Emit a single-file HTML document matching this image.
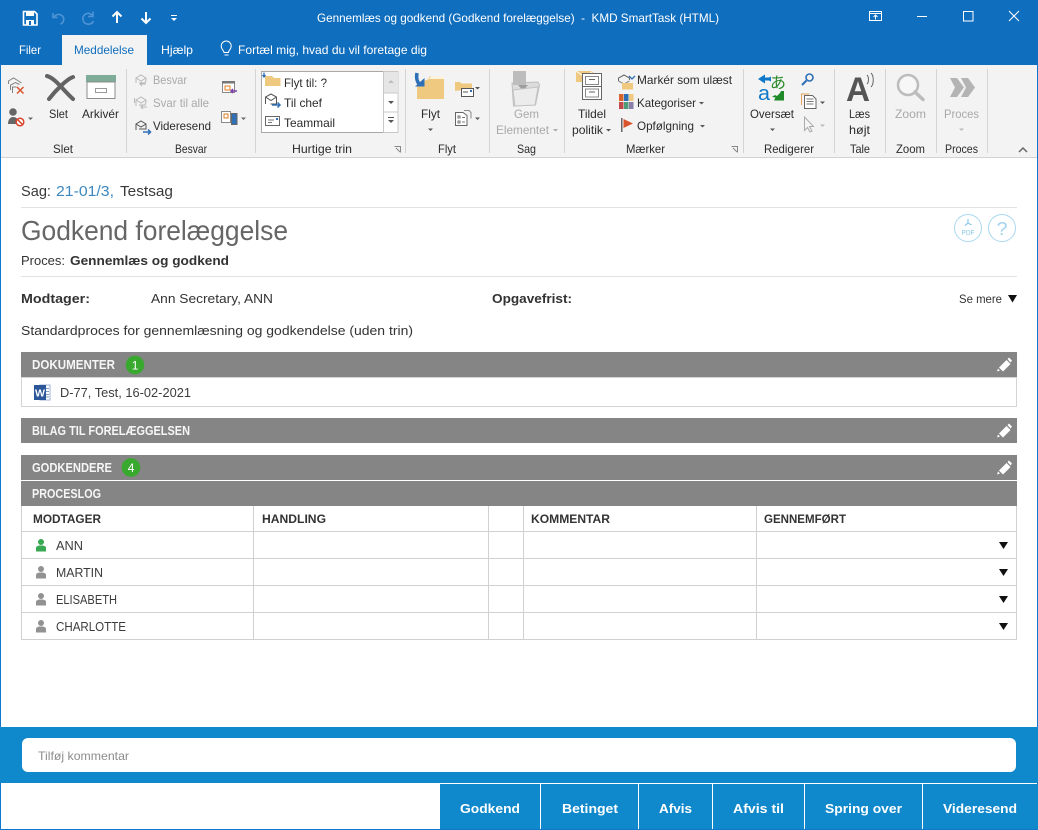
<!DOCTYPE html>
<html lang="da"><head><meta charset="utf-8"><title>Gennemlæs og godkend</title>
<style>
html,body{margin:0;padding:0;background:#fff;width:1038px;height:830px;overflow:hidden}
svg{display:block;position:absolute;left:0;top:0}
text{font-family:"Liberation Sans",sans-serif;font-size:12px;fill:#2b2b2b}
.w{fill:#fff}.g{fill:#a9a9a9}.b{font-weight:bold}
.hd{font-weight:bold;fill:#f6f6f6;font-size:12.5px}
.th{font-weight:bold;fill:#333;font-size:12px}
.r{fill:#3c3c3c;font-size:12.5px}
.btn{font-weight:bold;fill:#fff;font-size:13px}
.c{fill:#333;font-size:13px}
</style></head><body>
<svg width="1038" height="830" viewBox="0 0 1038 830" xmlns="http://www.w3.org/2000/svg">
<rect width="1038" height="830" fill="#fff"/>
<!-- title bar -->
<rect width="1038" height="65" fill="#106ebe"/>
<rect x="62" y="35" width="85" height="30" fill="#f3f3f3"/>
<!-- QAT -->
<path d="M23.5 11.5h11l2.500 2.500v11h-13.500z" fill="none" stroke="#fff" stroke-width="1.600"/>
<rect x="26" y="11" width="8" height="5" fill="#fff"/><rect x="26" y="20" width="8" height="5" fill="#fff"/><rect x="29" y="21" width="2" height="4" fill="#106ebe"/>
<path d="M53 13v4.500h4.500M53.500 17.500c2-2.500 4-3.500 6-3 3 .6 4.600 3 4.200 5.500-.3 1.800-1.500 3.300-3.200 4.200" fill="none" stroke="#4e94d4" stroke-width="1.600"/>
<path d="M93 11.500v5h-5M92.500 16c-1.500-2-3.500-3-5.500-2.500-3 .7-4.700 3.500-4 6.500.6 2.700 3.200 4.500 6 4.200 2-.2 3.700-1.500 4.500-3.200" fill="none" stroke="#4e94d4" stroke-width="1.600"/>
<path d="M117 23V12M112.500 16.500L117 12l4.500 4.500" fill="none" stroke="#fff" stroke-width="2"/>
<path d="M146 12v11M141.500 18.500L146 23l4.500-4.500" fill="none" stroke="#fff" stroke-width="2"/>
<rect x="171" y="15" width="6" height="1" fill="#fff"/><path d="M171 18h6l-3 3z" fill="#fff"/>
<text x="317" y="22" class="w" textLength="402" lengthAdjust="spacingAndGlyphs" xml:space="preserve">Gennemlæs og godkend (Godkend forelæggelse)  -  KMD SmartTask (HTML)</text>
<!-- window controls -->
<g fill="none" stroke="#fff" stroke-width="1">
<rect x="869.500" y="11.500" width="12" height="9"/><path d="M869.500 13.500h12M875.500 19.500v-4M873.500 17l2-2 2 2"/>
<path d="M917 16.500h10"/><rect x="963.500" y="11.500" width="9.500" height="9.500"/>
<path d="M1009 11l10 10M1019 11l-10 10"/></g>
<!-- tabs -->
<text x="19" y="54" class="w" textLength="22" lengthAdjust="spacingAndGlyphs">Filer</text>
<text x="74" y="54" style="fill:#106ebe" textLength="60" lengthAdjust="spacingAndGlyphs">Meddelelse</text>
<text x="161" y="54" class="w" textLength="32" lengthAdjust="spacingAndGlyphs">Hjælp</text>
<path d="M224 52.500c0-2-2.800-3-2.800-6.500a5 5 0 0 1 10 0c0 3.500-2.800 4.500-2.800 6.500zM224.500 55h4" fill="none" stroke="#fff" stroke-width="1"/>
<text x="238" y="54" class="w" textLength="189" lengthAdjust="spacingAndGlyphs">Fortæl mig, hvad du vil foretage dig</text>
<!-- ribbon -->
<rect y="65" width="1038" height="92" fill="#f3f3f3"/>
<rect y="157" width="1038" height="1" fill="#d2d2d2"/>
<g fill="#d4d4d4"><rect x="126" y="69" width="1" height="84"/><rect x="255" y="69" width="1" height="84"/><rect x="405" y="69" width="1" height="84"/><rect x="489" y="69" width="1" height="84"/><rect x="564" y="69" width="1" height="84"/><rect x="743" y="69" width="1" height="84"/><rect x="834" y="69" width="1" height="84"/><rect x="885" y="69" width="1" height="84"/><rect x="936" y="69" width="1" height="84"/><rect x="987" y="69" width="1" height="84"/></g>
<!-- slet group -->
<path d="M8.500 84v-3l5-3 5 3 3 2M10.500 90v-5l5-2.500 4 2M12.500 93v-6h4" fill="none" stroke="#808080" stroke-width="1"/>
<path d="M17 87l6.500 6.500M23.500 87L17 93.500" stroke="#d9532c" stroke-width="1.500"/>
<circle cx="13" cy="112" r="3.800" fill="#666"/><path d="M8 124c0-4 2-7 5-7s4 1.500 5 3v4z" fill="#666"/>
<circle cx="20" cy="122" r="3.800" fill="#fff" stroke="#d9432c" stroke-width="1.500"/><path d="M17.500 119.500l5 5" stroke="#d9432c" stroke-width="1.500"/>
<path d="M28 117.500h5l-2.500 2.500z" fill="#666"/>
<path d="M47 76c8 2 17 15 26 23M73 77c-6 2-17 13-24 22" fill="none" stroke="#636363" stroke-width="4" stroke-linecap="round"/>
<rect x="86" y="75" width="30" height="7" fill="#7fac98"/>
<rect x="87" y="82" width="28" height="16.500" fill="#fff" stroke="#8d8d8d"/><rect x="95.500" y="88.500" width="11" height="4" fill="#fff" stroke="#9a9a9a"/>
<text x="49" y="118" textLength="19" lengthAdjust="spacingAndGlyphs">Slet</text>
<text x="82" y="118" textLength="37" lengthAdjust="spacingAndGlyphs">Arkivér</text>
<text x="53" y="153" textLength="20" lengthAdjust="spacingAndGlyphs">Slet</text>
<!-- besvar -->
<g fill="none" stroke="#b9b9b9" stroke-width="1"><path d="M136 83v-5l5-3 5 3v2l-1 3h-6M136 78l5 3 5-3"/><path d="M146 84h-6m2-2l-2 2 2 2"/><path d="M136 106v-6l5-3 5 3v2l-1 3h-6M136 100l5 3 5-3M134.500 103v-5"/><path d="M147 107h-6m2-2l-2 2 2 2"/></g>
<path d="M136 130v-6l5-3 5 3v5h-7M136 124l5 3 5-3" fill="none" stroke="#555" stroke-width="1"/><path d="M143 132h7m-2-2.500l2.500 2.500-2.500 2.500" fill="none" stroke="#2f6fb6" stroke-width="1.500"/>
<text x="153" y="84" class="g" textLength="34" lengthAdjust="spacingAndGlyphs">Besvar</text>
<text x="153" y="107" class="g" textLength="56" lengthAdjust="spacingAndGlyphs">Svar til alle</text>
<text x="153" y="130" textLength="58" lengthAdjust="spacingAndGlyphs">Videresend</text>
<rect x="222.500" y="81.500" width="12" height="11" fill="#fff" stroke="#888"/><rect x="222" y="81" width="13" height="2.500" fill="#777"/><rect x="225" y="86" width="5" height="4" fill="#fff" stroke="#e07b20"/><path d="M237 91h-6m2-2l-2 2 2 2" fill="none" stroke="#7a3fa8" stroke-width="1.500"/>
<rect x="221.500" y="111.500" width="9" height="11" fill="#fff" stroke="#888"/><rect x="224" y="114" width="4" height="4" fill="#fff" stroke="#e07b20"/><rect x="231.500" y="113.500" width="5.500" height="11" fill="#2f6fb6" stroke="#666"/>
<path d="M241 117.500h5l-2.500 2.500z" fill="#666"/>
<text x="175" y="153" textLength="32" lengthAdjust="spacingAndGlyphs">Besvar</text>
<!-- quick steps -->
<rect x="261.500" y="71.500" width="123" height="61" fill="#fff" stroke="#a8a8a8"/>
<path d="M265 86V76h7l2 2h6.500v8z" fill="#efc97f"/><path d="M264 72.500v4m-1.500-1.500l1.500 2 1.500-2" fill="none" stroke="#2f6fb6" stroke-width="1.300"/>
<path d="M265.500 104v-7l5.500-3 5.500 3v7h-6M265.500 97l5.500 3.500 5.500-3.500" fill="none" stroke="#555"/><path d="M272 105h8m-2.500-2.500l2.500 2.500-2.500 2.500" fill="none" stroke="#2f6fb6" stroke-width="1.500"/>
<rect x="265.500" y="116.500" width="14" height="9" fill="#fff" stroke="#666"/><path d="M268 120h6M268 122.500h4" stroke="#777"/><rect x="276" y="118" width="2" height="2" fill="#2f6fb6"/>
<text x="284" y="87" textLength="43" lengthAdjust="spacingAndGlyphs">Flyt til: ?</text>
<text x="284" y="107" textLength="38" lengthAdjust="spacingAndGlyphs">Til chef</text>
<text x="284" y="127" textLength="51" lengthAdjust="spacingAndGlyphs">Teammail</text>
<rect x="383.500" y="71.500" width="14.500" height="61" fill="#fff" stroke="#c8c8c8"/><rect x="384" y="72" width="14" height="21" fill="#e6e6e6"/><rect x="384" y="92.500" width="14" height="1" fill="#c8c8c8"/><rect x="384" y="111.500" width="14" height="1" fill="#c8c8c8"/>
<path d="M388 83h6l-3-3z" fill="#bdbdbd"/><path d="M388 101h6l-3 3z" fill="#555"/><rect x="388" y="117" width="6" height="1" fill="#555"/><path d="M388 120h6l-3 3z" fill="#555"/>
<text x="292" y="153" textLength="60" lengthAdjust="spacingAndGlyphs">Hurtige trin</text>
<path d="M394.500 146.500h6v6M396 148l4 4" fill="none" stroke="#888"/>
<!-- flyt -->
<path d="M417 99V83l11-3.500 2-3.500h14v23z" fill="#efc97f"/><path d="M444 76h-13l-2 3h15z" fill="#fff" opacity=".75"/>
<path d="M417 73c-1 5 0 9 3 12" fill="none" stroke="#2f6fb6" stroke-width="3.500"/><path d="M415 86.500h9.500V78z" fill="#2f6fb6"/>
<path d="M455 91v-9h5l1.500 1.500H472v5z" fill="#efc97f"/><rect x="461.500" y="88.500" width="12" height="8" fill="#fff" stroke="#555"/><path d="M463 92h5" stroke="#555"/><rect x="470" y="90" width="2" height="2" fill="#2f6fb6"/>
<path d="M475 87h5l-2.500 2.500z" fill="#555"/>
<path d="M455.500 125.500v-13h7.500l4 3v10z" fill="#fff" stroke="#666"/><path d="M458 116h2v2h-2zM458 121h2v2h-2zM462 117.500h3M462 122h3" stroke="#777" fill="none"/><path d="M464 110.500h5l2 2v6" fill="none" stroke="#888"/>
<path d="M475 117.500h5l-2.500 2.500z" fill="#555"/>
<text x="421" y="118" textLength="19" lengthAdjust="spacingAndGlyphs">Flyt</text><path d="M428 128.500h5l-2.500 2.500z" fill="#555"/>
<text x="438" y="153" textLength="18" lengthAdjust="spacingAndGlyphs">Flyt</text>
<!-- sag -->
<path d="M512 83l26-1 1.500 3-4 20-22 1z" fill="#dcdcdc" stroke="#bdbdbd"/><path d="M513 71h13v14h-13z" fill="#bdbdbd"/><path d="M518 85l5 6 5-6z" fill="#9f9f9f"/><path d="M513 90l25-3-3 18-20 1z" fill="#ececec" stroke="#c4c4c4"/>
<text x="514" y="118" class="g" textLength="25" lengthAdjust="spacingAndGlyphs">Gem</text>
<text x="496" y="134" class="g" textLength="53" lengthAdjust="spacingAndGlyphs">Elementet</text><path d="M553 129h5l-2.500 2.500z" fill="#aaa"/>
<text x="517" y="153" textLength="19" lengthAdjust="spacingAndGlyphs">Sag</text>
<!-- mærker -->
<rect x="576" y="71" width="17" height="11" fill="#efc97f"/><path d="M576 71l8.500 6 8.500-6" fill="none" stroke="#fff"/>
<rect x="582.500" y="73.500" width="19" height="26" fill="#fff" stroke="#666"/><path d="M582.500 86.500h19" stroke="#666"/><rect x="585.500" y="76.500" width="13" height="8" fill="none" stroke="#888"/><rect x="585.500" y="89" width="13" height="8" fill="none" stroke="#888"/><path d="M589 79.500h6M589 92h6" stroke="#666"/>
<text x="578" y="118" textLength="28" lengthAdjust="spacingAndGlyphs">Tildel</text>
<text x="572" y="134" textLength="31" lengthAdjust="spacingAndGlyphs">politik</text><path d="M606 129h5l-2.500 2.500z" fill="#555"/>
<path d="M618.500 81v-3l5.500-3 5.500 3v2" fill="none" stroke="#666"/><path d="M618.500 81l5.500 3 5.500-3" fill="none" stroke="#888"/><rect x="622" y="83" width="11" height="6.500" fill="#efc97f"/><path d="M629 76l3 3 3-3" fill="none" stroke="#2f6fb6" stroke-width="1.300"/>
<g><rect x="619" y="94" width="4.500" height="7" fill="#d9652c"/><rect x="624" y="94" width="4.500" height="7" fill="#2f6fb6"/><rect x="629" y="94" width="4.500" height="7" fill="#efc97f"/><rect x="619" y="102" width="4.500" height="7" fill="#c04a4a"/><rect x="624" y="102" width="4.500" height="7" fill="#4f9d78"/><rect x="629" y="102" width="4.500" height="7" fill="#8a7fa8"/></g>
<rect x="621" y="118" width="1.500" height="14" fill="#666"/><path d="M623.500 119l9.500 4.500-9.500 4.500z" fill="#d9532c"/>
<text x="637" y="84" textLength="95" lengthAdjust="spacingAndGlyphs">Markér som ulæst</text>
<text x="637" y="107" textLength="59" lengthAdjust="spacingAndGlyphs">Kategoriser</text><path d="M699 102h5l-2.500 2.500z" fill="#555"/>
<text x="637" y="130" textLength="57" lengthAdjust="spacingAndGlyphs">Opfølgning</text><path d="M700 125h5l-2.500 2.500z" fill="#555"/>
<text x="626" y="153" textLength="39" lengthAdjust="spacingAndGlyphs">Mærker</text>
<path d="M731.500 146.500h6v6M733 148l4 4" fill="none" stroke="#888"/>
<!-- redigerer -->
<path d="M769 77.500h-4v-3l-7 4.500 7 4.500v-3h4l2 1v-5z" fill="#0f78c8"/>
<text x="770" y="88" style="fill:#2a8a2a;font-family:'Noto Sans CJK JP',sans-serif;font-size:16px">あ</text>
<text x="758" y="100" style="fill:#0f78c8;font-size:20px" textLength="12" lengthAdjust="spacingAndGlyphs">a</text>
<path d="M784 91v9.500h-10l1.500-3-3.500-.5 3-2 2 1 3-3 1-2z" fill="#1e8a2a"/>
<circle cx="809.500" cy="77.500" r="3.500" fill="none" stroke="#2f6fb6" stroke-width="1.600"/><path d="M806.500 80.500l-4.500 4.500" stroke="#2f6fb6" stroke-width="2"/>
<path d="M801.500 105v-11h8" fill="none" stroke="#e8a35a"/><path d="M804.500 108.500v-13h8l3.500 3.500v9.500z" fill="#fff" stroke="#666"/><path d="M806.500 99h7M806.500 101.500h7M806.500 104h7" stroke="#777"/>
<path d="M820 101.500h5l-2.500 2.500z" fill="#555"/>
<path d="M804.500 117v13.500l3-3 2.500 4.500 2-1-2.500-4.500h4z" fill="#f5f5f5" stroke="#aaa"/><path d="M820 124.500h5l-2.500 2.500z" fill="#bbb"/>
<text x="750" y="118" textLength="44" lengthAdjust="spacingAndGlyphs">Oversæt</text><path d="M770 128.500h5l-2.500 2.500z" fill="#555"/>
<text x="764" y="153" textLength="50" lengthAdjust="spacingAndGlyphs">Redigerer</text>
<!-- tale -->
<text x="846" y="101" style="fill:#555;font-size:34px;font-weight:bold" textLength="24" lengthAdjust="spacingAndGlyphs">A</text>
<path d="M867 75c2 2 2 7 0 9M871 73c3 3 3 11 0 14" fill="none" stroke="#666"/>
<text x="849" y="118" textLength="21" lengthAdjust="spacingAndGlyphs">Læs</text><text x="849" y="134" textLength="21" lengthAdjust="spacingAndGlyphs">højt</text>
<text x="850" y="153" textLength="20" lengthAdjust="spacingAndGlyphs">Tale</text>
<!-- zoom -->
<circle cx="908" cy="85" r="10" fill="#f7f7f7" stroke="#bcbcbc" stroke-width="2.500"/><path d="M915 92l8 7.500" stroke="#bcbcbc" stroke-width="3.500" stroke-linecap="round"/>
<text x="895" y="118" class="g" textLength="31" lengthAdjust="spacingAndGlyphs">Zoom</text>
<text x="896" y="153" textLength="29" lengthAdjust="spacingAndGlyphs">Zoom</text>
<!-- proces -->
<path d="M950 78h7l7 9.500-7 9.500h-7l5-9.500z" fill="#b4b4b4"/><path d="M961 78h7l7 9.500-7 9.500h-7l5-9.500z" fill="#b4b4b4"/>
<text x="944" y="118" class="g" textLength="35" lengthAdjust="spacingAndGlyphs">Proces</text><path d="M959 128.500h5l-2.500 2.500z" fill="#bbb"/>
<text x="945" y="153" textLength="33" lengthAdjust="spacingAndGlyphs">Proces</text>
<path d="M1019 152l4-4 4 4" fill="none" stroke="#666" stroke-width="1.500"/>
<!-- window borders -->
<rect x="0" y="65" width="1" height="765" fill="#0f78cc"/><rect x="1037" y="65" width="1" height="765" fill="#0f78cc"/>
<!-- content -->
<text x="21" y="196" style="font-size:14.500px;fill:#3a3a3a" textLength="30" lengthAdjust="spacingAndGlyphs">Sag:</text>
<text x="56" y="196" style="font-size:14.500px;fill:#3d88bf" textLength="58" lengthAdjust="spacingAndGlyphs">21-01/3,</text>
<text x="120" y="196" style="font-size:14.500px;fill:#3a3a3a" textLength="53" lengthAdjust="spacingAndGlyphs">Testsag</text>
<rect x="21" y="207" width="996" height="1" fill="#e2e2e2"/>
<text x="21" y="240" style="font-size:28px;fill:#666" textLength="267" lengthAdjust="spacingAndGlyphs">Godkend forelæggelse</text>
<text x="21" y="265" class="c" textLength="44" lengthAdjust="spacingAndGlyphs">Proces:</text>
<text x="70" y="265" class="c b" textLength="159" lengthAdjust="spacingAndGlyphs">Gennemlæs og godkend</text>
<rect x="21" y="276" width="996" height="1" fill="#e2e2e2"/>
<circle cx="968" cy="228" r="13.500" fill="#fff" stroke="#a9d8f0"/><circle cx="1002" cy="228" r="13.500" fill="#fff" stroke="#a9d8f0"/>
<path d="M968 219v4l-3 2.500M968 223l3.500 2" fill="none" stroke="#8cc7e8" stroke-width="1.200"/>
<text x="961.500" y="235" style="font-size:7.500px;fill:#8cc7e8" textLength="13" lengthAdjust="spacingAndGlyphs">PDF</text>
<text x="996.500" y="235" style="font-size:18px;fill:#a3d3ee" textLength="11" lengthAdjust="spacingAndGlyphs">?</text>
<text x="21" y="303" class="c b" textLength="69" lengthAdjust="spacingAndGlyphs">Modtager:</text>
<text x="151" y="303" class="c" textLength="122" lengthAdjust="spacingAndGlyphs">Ann Secretary, ANN</text>
<text x="492" y="303" class="c b" textLength="80" lengthAdjust="spacingAndGlyphs">Opgavefrist:</text>
<text x="959" y="303" style="fill:#333" textLength="43" lengthAdjust="spacingAndGlyphs">Se mere</text>
<path d="M1008 295h9l-4.500 7.500z" fill="#111"/>
<text x="21" y="335" class="c" textLength="392" lengthAdjust="spacingAndGlyphs">Standardproces for gennemlæsning og godkendelse (uden trin)</text>
<!-- bars -->
<g fill="#858586"><rect x="21" y="352" width="996" height="25"/><rect x="21" y="418" width="996" height="25"/><rect x="21" y="455" width="996" height="25"/><rect x="21" y="481" width="996" height="25"/></g>
<text x="32" y="369" class="hd" textLength="83" lengthAdjust="spacingAndGlyphs">DOKUMENTER</text>
<circle cx="135" cy="365" r="9.300" fill="#38a82e"/><text x="131.700" y="369.500" style="fill:#fff;font-size:12px">1</text>
<text x="32" y="435" class="hd" textLength="158" lengthAdjust="spacingAndGlyphs">BILAG TIL FORELÆGGELSEN</text>
<text x="32" y="472" class="hd" textLength="80" lengthAdjust="spacingAndGlyphs">GODKENDERE</text>
<circle cx="131" cy="467.500" r="9.300" fill="#38a82e"/><text x="127.700" y="472" style="fill:#fff;font-size:12px">4</text>
<text x="32" y="498" class="hd" textLength="69" lengthAdjust="spacingAndGlyphs">PROCESLOG</text>
<g fill="#fff"><path d="M997 371.500l1-3 2 2zM999 367.500l7.500-7.500 4 4-7.500 7.500zM1007.500 359l1.500-1.500 3 3-1.500 2z"/><path d="M997 437.500l1-3 2 2zM999 433.500l7.500-7.500 4 4-7.500 7.500zM1007.500 425l1.500-1.500 3 3-1.500 2z"/><path d="M997 474.500l1-3 2 2zM999 470.500l7.500-7.500 4 4-7.500 7.500zM1007.500 462l1.500-1.500 3 3-1.500 2z"/></g>
<!-- doc box -->
<rect x="21.500" y="377.500" width="995" height="29" fill="#fff" stroke="#d4d4d4"/>
<rect x="40" y="385" width="10" height="15" fill="#fff" stroke="#9db3d3"/><path d="M44 388.500h5M44 391.500h5M44 394.500h5M44 397h5" stroke="#7f9cc8"/>
<rect x="34" y="385" width="12" height="15" fill="#2b579a"/><text x="35" y="396.500" style="fill:#fff;font-size:10px;font-weight:bold" textLength="10" lengthAdjust="spacingAndGlyphs">W</text>
<text x="60" y="397" class="r" textLength="131" lengthAdjust="spacingAndGlyphs">D-77, Test, 16-02-2021</text>
<!-- table -->
<g stroke="#d0d0d0" fill="none"><path d="M21.500 506v133.500H1016.500V506M21.500 531.500h995M21.500 558.500h995M21.500 585.500h995M21.500 612.500h995M253.500 506v134M488.500 506v134M523.500 506v134M756.500 506v134"/></g>
<text x="33" y="523" class="th" textLength="68" lengthAdjust="spacingAndGlyphs">MODTAGER</text>
<text x="262" y="523" class="th" textLength="64" lengthAdjust="spacingAndGlyphs">HANDLING</text>
<text x="531" y="523" class="th" textLength="79" lengthAdjust="spacingAndGlyphs">KOMMENTAR</text>
<text x="764" y="523" class="th" textLength="82" lengthAdjust="spacingAndGlyphs">GENNEMFØRT</text>
<g fill="#38a852"><circle cx="41" cy="542" r="3"/><path d="M36 551.500v-3.500c0-1.500 1.500-2.500 5-2.500s5 1 5 2.500v3.500z"/></g>
<g fill="#929292"><circle cx="41" cy="569" r="3"/><path d="M36 578.500v-3.500c0-1.500 1.500-2.500 5-2.500s5 1 5 2.500v3.500z"/><circle cx="41" cy="596" r="3"/><path d="M36 605.500v-3.500c0-1.500 1.500-2.500 5-2.500s5 1 5 2.500v3.500z"/><circle cx="41" cy="623" r="3"/><path d="M36 632.500v-3.500c0-1.500 1.500-2.500 5-2.500s5 1 5 2.500v3.500z"/></g>
<text x="56" y="550" class="r" textLength="27" lengthAdjust="spacingAndGlyphs">ANN</text>
<text x="56" y="577" class="r" textLength="47" lengthAdjust="spacingAndGlyphs">MARTIN</text>
<text x="56" y="604" class="r" textLength="61" lengthAdjust="spacingAndGlyphs">ELISABETH</text>
<text x="56" y="631" class="r" textLength="70" lengthAdjust="spacingAndGlyphs">CHARLOTTE</text>
<g fill="#111"><path d="M999 542h9l-4.500 7z"/><path d="M999 569h9l-4.500 7z"/><path d="M999 596h9l-4.500 7z"/><path d="M999 623h9l-4.500 7z"/></g>
<!-- comment band -->
<rect x="0" y="727" width="1038" height="56" fill="#0f88cc"/>
<rect x="22" y="738" width="994" height="34" rx="6" fill="#fff"/>
<text x="38" y="760" style="fill:#8c8c8c" textLength="91" lengthAdjust="spacingAndGlyphs">Tilføj kommentar</text>
<!-- buttons -->
<rect x="440" y="784" width="598" height="45" fill="#0f88cc"/>
<rect x="0" y="829" width="1038" height="1" fill="#0f78cc"/>
<g fill="#fff"><rect x="540" y="784" width="1" height="45"/><rect x="638" y="784" width="1" height="45"/><rect x="712" y="784" width="1" height="45"/><rect x="804" y="784" width="1" height="45"/><rect x="922" y="784" width="1" height="45"/></g>
<text x="460" y="813" class="btn" textLength="60" lengthAdjust="spacingAndGlyphs">Godkend</text>
<text x="562" y="813" class="btn" textLength="56" lengthAdjust="spacingAndGlyphs">Betinget</text>
<text x="659" y="813" class="btn" textLength="33" lengthAdjust="spacingAndGlyphs">Afvis</text>
<text x="733" y="813" class="btn" textLength="51" lengthAdjust="spacingAndGlyphs">Afvis til</text>
<text x="825" y="813" class="btn" textLength="77" lengthAdjust="spacingAndGlyphs">Spring over</text>
<text x="943" y="813" class="btn" textLength="74" lengthAdjust="spacingAndGlyphs">Videresend</text>
</svg>
</body></html>
